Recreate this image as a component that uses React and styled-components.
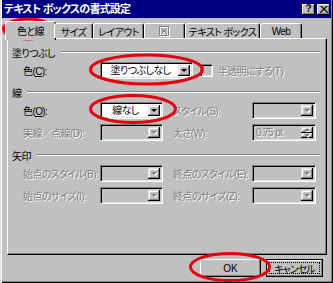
import React from "react"
import styled, { createGlobalStyle } from "styled-components"

const GlobalStyle = createGlobalStyle`
  html, body {
    margin: 0;
    padding: 0;
    background: #c0c0c0;
  }
  body {
    font-family: "Liberation Sans", "Noto Sans CJK JP", sans-serif;
    font-size: 10px;
    font-feature-settings: "palt";
    letter-spacing: -0.6px;
    color: #000;
  }
`

const Window = styled.div`
  position: relative;
  width: 333px;
  height: 283px;
  box-sizing: border-box;
  background: #c0c0c0;
  padding: 0 2px 2px 2px;
  box-shadow: inset 1px 0 #dfdfdf, inset 2px 0 #fff, inset -1px -1px #000,
    inset -2px -2px #808080;
  display: flex;
  flex-direction: column;
  overflow: hidden;
`

const TitleBar = styled.div`
  height: 18px;
  background: #000080;
  display: flex;
  align-items: center;
  padding: 0 1px 0 2px;
  flex-shrink: 0;
`

const TitleText = styled.div`
  flex: 1;
  color: #fff;
  font-size: 11px;
  font-weight: bold;
  line-height: 18px;
  letter-spacing: -0.8px;
  white-space: nowrap;
`

const CaptionButton = styled.div`
  width: 13px;
  height: 11px;
  margin-left: ${p => p.$gap || 0}px;
  background: #c0c0c0;
  box-shadow: inset -1px -1px #000, inset 1px 1px #fff, inset -2px -2px #808080;
  display: flex;
  align-items: center;
  justify-content: center;
  font-size: 10px;
  font-weight: bold;
  letter-spacing: 0;
  line-height: 1;
`

const Body = styled.div`
  padding: 3px 4px 0 5px;
  display: flex;
  flex-direction: column;
`

const TabRow = styled.div`
  height: 17px;
  display: flex;
  align-items: flex-end;
  position: relative;
  z-index: 1;
`

const Tab = styled.div`
  box-sizing: border-box;
  width: ${p => (p.$active ? p.$w + 4 : p.$w)}px;
  height: ${p => (p.$active ? 19 : 15)}px;
  margin: 0 ${p => (p.$active ? -2 : 0)}px ${p => (p.$active ? -2 : 0)}px;
  background: #c0c0c0;
  border-top: 1px solid #fff;
  border-left: 1px solid #fff;
  border-right: 1px solid #000;
  border-radius: 3px 3px 0 0;
  box-shadow: inset -1px 0 #808080;
  display: flex;
  align-items: center;
  justify-content: center;
  padding-bottom: ${p => (p.$active ? 2 : 0)}px;
  white-space: nowrap;
`

const Panel = styled.div`
  box-sizing: border-box;
  width: 320px;
  height: 217px;
  border-top: 1px solid #fff;
  border-left: 1px solid #fff;
  border-right: 1px solid #000;
  border-bottom: 1px solid #000;
  box-shadow: inset -1px -1px #808080;
  padding: 6px 6px 0 4px;
  display: flex;
  flex-direction: column;
`

const Heading = styled.div`
  height: 14px;
  display: flex;
  align-items: center;
  margin-top: ${p => p.$top || 0}px;
  white-space: nowrap;
`

const Etched = styled.div`
  flex: 1;
  margin-left: 6px;
  border-top: 1px solid #808080;
  border-bottom: 1px solid #fff;
`

const Row = styled.div`
  display: grid;
  grid-template-columns: ${p => p.$cols};
  align-items: center;
  height: 17px;
  margin: ${p => p.$top || 3}px 0 0 11px;
`

const Label = styled.div`
  white-space: nowrap;
  color: ${p => (p.$disabled ? "#808080" : "#000")};
  text-shadow: ${p => (p.$disabled ? "1px 1px 0 #fff" : "none")};
`

const Combo = styled.div`
  box-sizing: border-box;
  width: ${p => p.$w}px;
  height: 17px;
  display: flex;
  padding: 2px;
  background: ${p => (p.$disabled ? "#c0c0c0" : "#fff")};
  border-top: 1px solid #808080;
  border-left: 1px solid #808080;
  border-right: 1px solid #fff;
  border-bottom: 1px solid #fff;
  box-shadow: inset 1px 1px #000, inset -1px -1px #dfdfdf;
`

const ComboValue = styled.div`
  flex: 1;
  display: flex;
  align-items: center;
  justify-content: ${p => (p.$left ? "flex-start" : "center")};
  padding-left: ${p => (p.$left ? 1 : 0)}px;
  white-space: nowrap;
  line-height: 1;
  color: ${p => (p.$disabled ? "#808080" : "#000")};
  text-shadow: ${p => (p.$disabled ? "1px 1px 0 #fff" : "none")};
`

const DropButton = styled.div`
  width: 12px;
  height: 100%;
  box-sizing: border-box;
  background: #c0c0c0;
  box-shadow: inset -1px -1px #000, inset 1px 1px #dfdfdf, inset -2px -2px #808080,
    inset 2px 2px #fff;
  display: flex;
  align-items: center;
  justify-content: center;
`

const Arrow = styled.div`
  width: 0;
  height: 0;
  border-left: 3px solid transparent;
  border-right: 3px solid transparent;
  border-top: ${p => (p.$up ? 0 : 3)}px solid ${p => (p.$disabled ? "#808080" : "#000")};
  border-bottom: ${p => (p.$up ? 3 : 0)}px solid ${p => (p.$disabled ? "#808080" : "#000")};
  filter: ${p => (p.$disabled ? "drop-shadow(1px 1px 0 #fff)" : "none")};
`

const SpinButtons = styled.div`
  width: 12px;
  display: flex;
  flex-direction: column;
`

const SpinHalf = styled(DropButton)`
  height: 50%;
`

const CheckRow = styled.div`
  display: flex;
  align-items: center;
`

const CheckBox = styled.div`
  box-sizing: border-box;
  width: 13px;
  height: 13px;
  background: #c0c0c0;
  border-top: 1px solid #808080;
  border-left: 1px solid #808080;
  border-right: 1px solid #fff;
  border-bottom: 1px solid #fff;
  box-shadow: inset 1px 1px #000, inset -1px -1px #dfdfdf;
  margin-right: 5px;
`

const ButtonRow = styled.div`
  display: flex;
  justify-content: flex-end;
  gap: 5px;
  margin: 4px 4px 0 0;
`

const PushButton = styled.div`
  box-sizing: border-box;
  width: ${p => p.$w}px;
  height: 18px;
  background: #c0c0c0;
  border: ${p => (p.$focus ? "1px solid #000" : "none")};
  box-shadow: ${p =>
    p.$focus
      ? "inset -1px -1px #808080, inset 1px 1px #fff"
      : "inset -1px -1px #000, inset 1px 1px #fff, inset -2px -2px #808080"};
  display: flex;
  align-items: center;
  justify-content: center;
  position: relative;
  white-space: nowrap;
  letter-spacing: ${p => (p.$focus ? "-1px" : "0")};

  &::after {
    content: "";
    display: ${p => (p.$focus ? "block" : "none")};
    position: absolute;
    inset: 2px 2px;
    border: 1px dotted #000;
  }
`

const Overlay = styled.svg`
  position: absolute;
  left: 0;
  top: 0;
  pointer-events: none;
`

const Disabled = ({ children }) => <Label $disabled>{children}</Label>

const Select = ({ w, value, disabled }) => (
  <Combo $w={w} $disabled={disabled}>
    <ComboValue $disabled={disabled}>{value}</ComboValue>
    <DropButton>
      <Arrow $disabled={disabled} />
    </DropButton>
  </Combo>
)

const PictureIcon = () => (
  <svg width="11" height="11" viewBox="0 0 11 11">
    <g transform="translate(1 1)" stroke="#fff" fill="none">
      <rect x="0.5" y="0.5" width="9" height="9" />
      <path d="M2 2 L8 8 M8 2 L2 8 M2 5 H8" />
    </g>
    <g stroke="#808080" fill="none">
      <rect x="0.5" y="0.5" width="9" height="9" />
      <path d="M2 2 L8 8 M8 2 L2 8 M2 5 H8" />
    </g>
  </svg>
)

const lineCols = "77px 63px 10px 79px 64px"

const App = () => {
  return (
    <>
      <GlobalStyle />
      <Window>
        <TitleBar>
          <TitleText>テキスト ボックスの書式設定</TitleText>
          <CaptionButton>?</CaptionButton>
          <CaptionButton $gap={2}>
            <svg width="8" height="7" viewBox="0 0 8 7">
              <path d="M0.5 0 L7.5 7 M7.5 0 L0.5 7 M1.5 0 L8.5 7 M6.5 0 L-0.5 7" stroke="#000" strokeWidth="1" />
            </svg>
          </CaptionButton>
        </TitleBar>
        <Body>
          <TabRow>
            <Tab $active $w={47}>色と線</Tab>
            <Tab $w={39}>サイズ</Tab>
            <Tab $w={51}>レイアウト</Tab>
            <Tab $w={41}>
              <PictureIcon />
            </Tab>
            <Tab $w={75}>テキスト ボックス</Tab>
            <Tab $w={42}>Web</Tab>
          </TabRow>
          <Panel>
            <Heading>
              塗りつぶし
              <Etched />
            </Heading>
            <Row $cols="77px 93px 7px auto">
              <Label>
                色(<u>C</u>):
              </Label>
              <Select w={93} value="塗りつぶしなし" />
              <span />
              <CheckRow>
                <CheckBox />
                <Disabled>半透明にする(T)</Disabled>
              </CheckRow>
            </Row>

            <Heading $top={6}>
              線
              <Etched />
            </Heading>
            <Row $cols={lineCols}>
              <Label>
                色(<u>O</u>):
              </Label>
              <Select w={63} value="線なし" />
              <span />
              <Disabled>スタイル(S):</Disabled>
              <Select w={64} disabled />
            </Row>
            <Row $cols={lineCols} $top={5}>
              <Disabled>実線／点線(D):</Disabled>
              <Select w={63} disabled />
              <span />
              <Disabled>太さ(W):</Disabled>
              <Combo $w={64} $disabled>
                <ComboValue $left $disabled>
                  0.75 pt
                </ComboValue>
                <SpinButtons>
                  <SpinHalf>
                    <Arrow $up $disabled />
                  </SpinHalf>
                  <SpinHalf>
                    <Arrow $disabled />
                  </SpinHalf>
                </SpinButtons>
              </Combo>
            </Row>

            <Heading $top={7}>
              矢印
              <Etched />
            </Heading>
            <Row $cols={lineCols}>
              <Disabled>始点のスタイル(B):</Disabled>
              <Select w={63} disabled />
              <span />
              <Disabled>終点のスタイル(E):</Disabled>
              <Select w={64} disabled />
            </Row>
            <Row $cols={lineCols} $top={5}>
              <Disabled>始点のサイズ(I):</Disabled>
              <Select w={63} disabled />
              <span />
              <Disabled>終点のサイズ(Z):</Disabled>
              <Select w={64} disabled />
            </Row>
          </Panel>
          <ButtonRow>
            <PushButton $w={61}>OK</PushButton>
            <PushButton $w={57} $focus>
              キャンセル
            </PushButton>
          </ButtonRow>
        </Body>
        <Overlay width="333" height="283">
          <g fill="none" stroke="#e4000f" strokeWidth="3">
            <ellipse cx="28" cy="29" rx="24.5" ry="10" />
            <ellipse cx="146.5" cy="69.5" rx="56" ry="14.5" />
            <ellipse cx="133" cy="109" rx="42.5" ry="13.5" />
            <ellipse cx="230" cy="267" rx="39.5" ry="13.5" />
          </g>
        </Overlay>
      </Window>
    </>
  )
}

export default App
